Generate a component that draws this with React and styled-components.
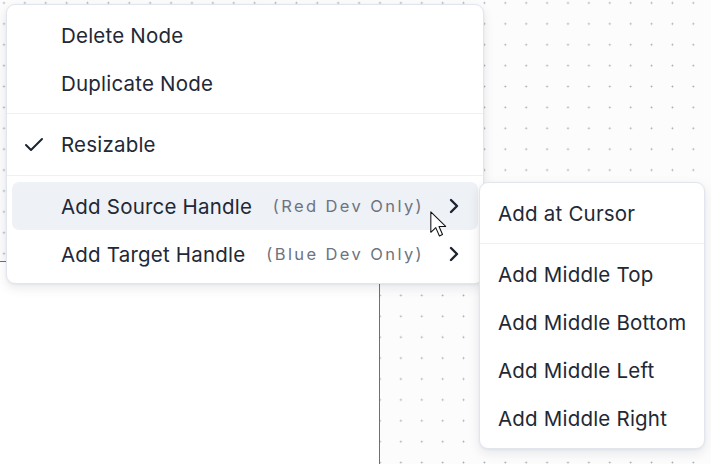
import React from "react";
import styled, { createGlobalStyle } from "styled-components";
import { Check, ChevronRight } from "lucide-react";

const GlobalStyle = createGlobalStyle`
  * {
    box-sizing: border-box;
  }
  body {
    margin: 0;
    font-family: Inter, "Noto Sans", sans-serif;
    background: #fcfcfd;
  }
`;

const mainItems = [
  { label: "Delete Node" },
  { label: "Duplicate Node" },
  { separator: true },
  { label: "Resizable", checked: true },
  { separator: true },
  { label: "Add Source Handle", note: "(Red Dev Only)", sub: true, active: true },
  { label: "Add Target Handle", note: "(Blue Dev Only)", sub: true },
];

const subItems = [
  { label: "Add at Cursor" },
  { separator: true },
  { label: "Add Middle Top" },
  { label: "Add Middle Bottom" },
  { label: "Add Middle Left" },
  { label: "Add Middle Right" },
];

const App = () => {
  return (
    <>
      <GlobalStyle />
      <Canvas>
        <Node $left={-20} $top={261} $width={400} $height={240} />

        <Menu $left={6} $top={4} $width={478}>
          {mainItems.map((item, i) =>
            item.separator ? (
              <Separator key={i} />
            ) : (
              <Item key={i} $active={item.active} $indent>
                <CheckSlot>{item.checked && <Check size={24} strokeWidth={2} />}</CheckSlot>
                <Label>{item.label}</Label>
                {item.note && <Note>{item.note}</Note>}
                {item.sub && (
                  <Chevron>
                    <ChevronRight size={24} strokeWidth={2.4} />
                  </Chevron>
                )}
              </Item>
            )
          )}
        </Menu>

        <Menu $left={479} $top={182}>
          {subItems.map((item, i) =>
            item.separator ? (
              <Separator key={i} />
            ) : (
              <Item key={i}>
                <Label>{item.label}</Label>
              </Item>
            )
          )}
        </Menu>

        <Pointer viewBox="0 0 13 20" width="17" height="26">
          <path
            d="M0.6 0.6 V16.4 L4.4 12.8 L7.2 19.2 L9.6 18.1 L6.9 11.9 H12 Z"
            fill="#fff"
            stroke="#111"
            strokeWidth="0.8"
            strokeLinejoin="round"
          />
        </Pointer>
      </Canvas>
    </>
  );
};

const Canvas = styled.div`
  position: relative;
  width: 711px;
  height: 464px;
  overflow: hidden;
  background-color: #fcfcfd;
  background-image: radial-gradient(circle, #a4a7ae 0.75px, transparent 1.15px);
  background-size: 20.9px 20.9px;
  background-position: -6.5px -7.5px;
`;

const Node = styled.div`
  position: absolute;
  left: ${(p) => p.$left}px;
  top: ${(p) => p.$top}px;
  width: ${(p) => p.$width}px;
  height: ${(p) => p.$height}px;
  background: #ffffff;
  border: 1px solid #4f6fd6;
`;

const Menu = styled.div`
  position: absolute;
  left: ${(p) => p.$left}px;
  top: ${(p) => p.$top}px;
  width: ${(p) => (p.$width ? `${p.$width}px` : "auto")};
  display: flex;
  flex-direction: column;
  padding: 6px 5px 5px;
  background: #ffffff;
  border: 1px solid #e1e6ee;
  border-radius: 9px;
  box-shadow: 0 4px 12px rgba(15, 23, 42, 0.09), 0 1px 3px rgba(15, 23, 42, 0.05);
`;

const Item = styled.div`
  display: flex;
  align-items: center;
  height: 48px;
  flex: none;
  padding: ${(p) => (p.$indent ? "0 12px 0 10px" : "0 13px")};
  border-radius: 7px;
  background: ${(p) => (p.$active ? "#eef1f6" : "transparent")};
  color: #222835;
  font-size: 20.5px;
  font-weight: 370;
  white-space: nowrap;
`;

const CheckSlot = styled.span`
  display: flex;
  align-items: center;
  width: 39px;
  flex: none;
  color: #1d2331;
`;

const Label = styled.span`
  letter-spacing: 0.2px;
`;

const Note = styled.span`
  margin-left: auto;
  font-size: 16.5px;
  letter-spacing: 2.4px;
  color: #6d7380;
`;

const Chevron = styled.span`
  display: flex;
  margin-left: 18px;
  color: #1d2331;
`;

const Separator = styled.div`
  height: 1px;
  flex: none;
  margin: 6px -5px 6.5px;
  background: #edf0f5;
`;

const Pointer = styled.svg`
  position: absolute;
  left: 430px;
  top: 211px;
`;

export default App;
